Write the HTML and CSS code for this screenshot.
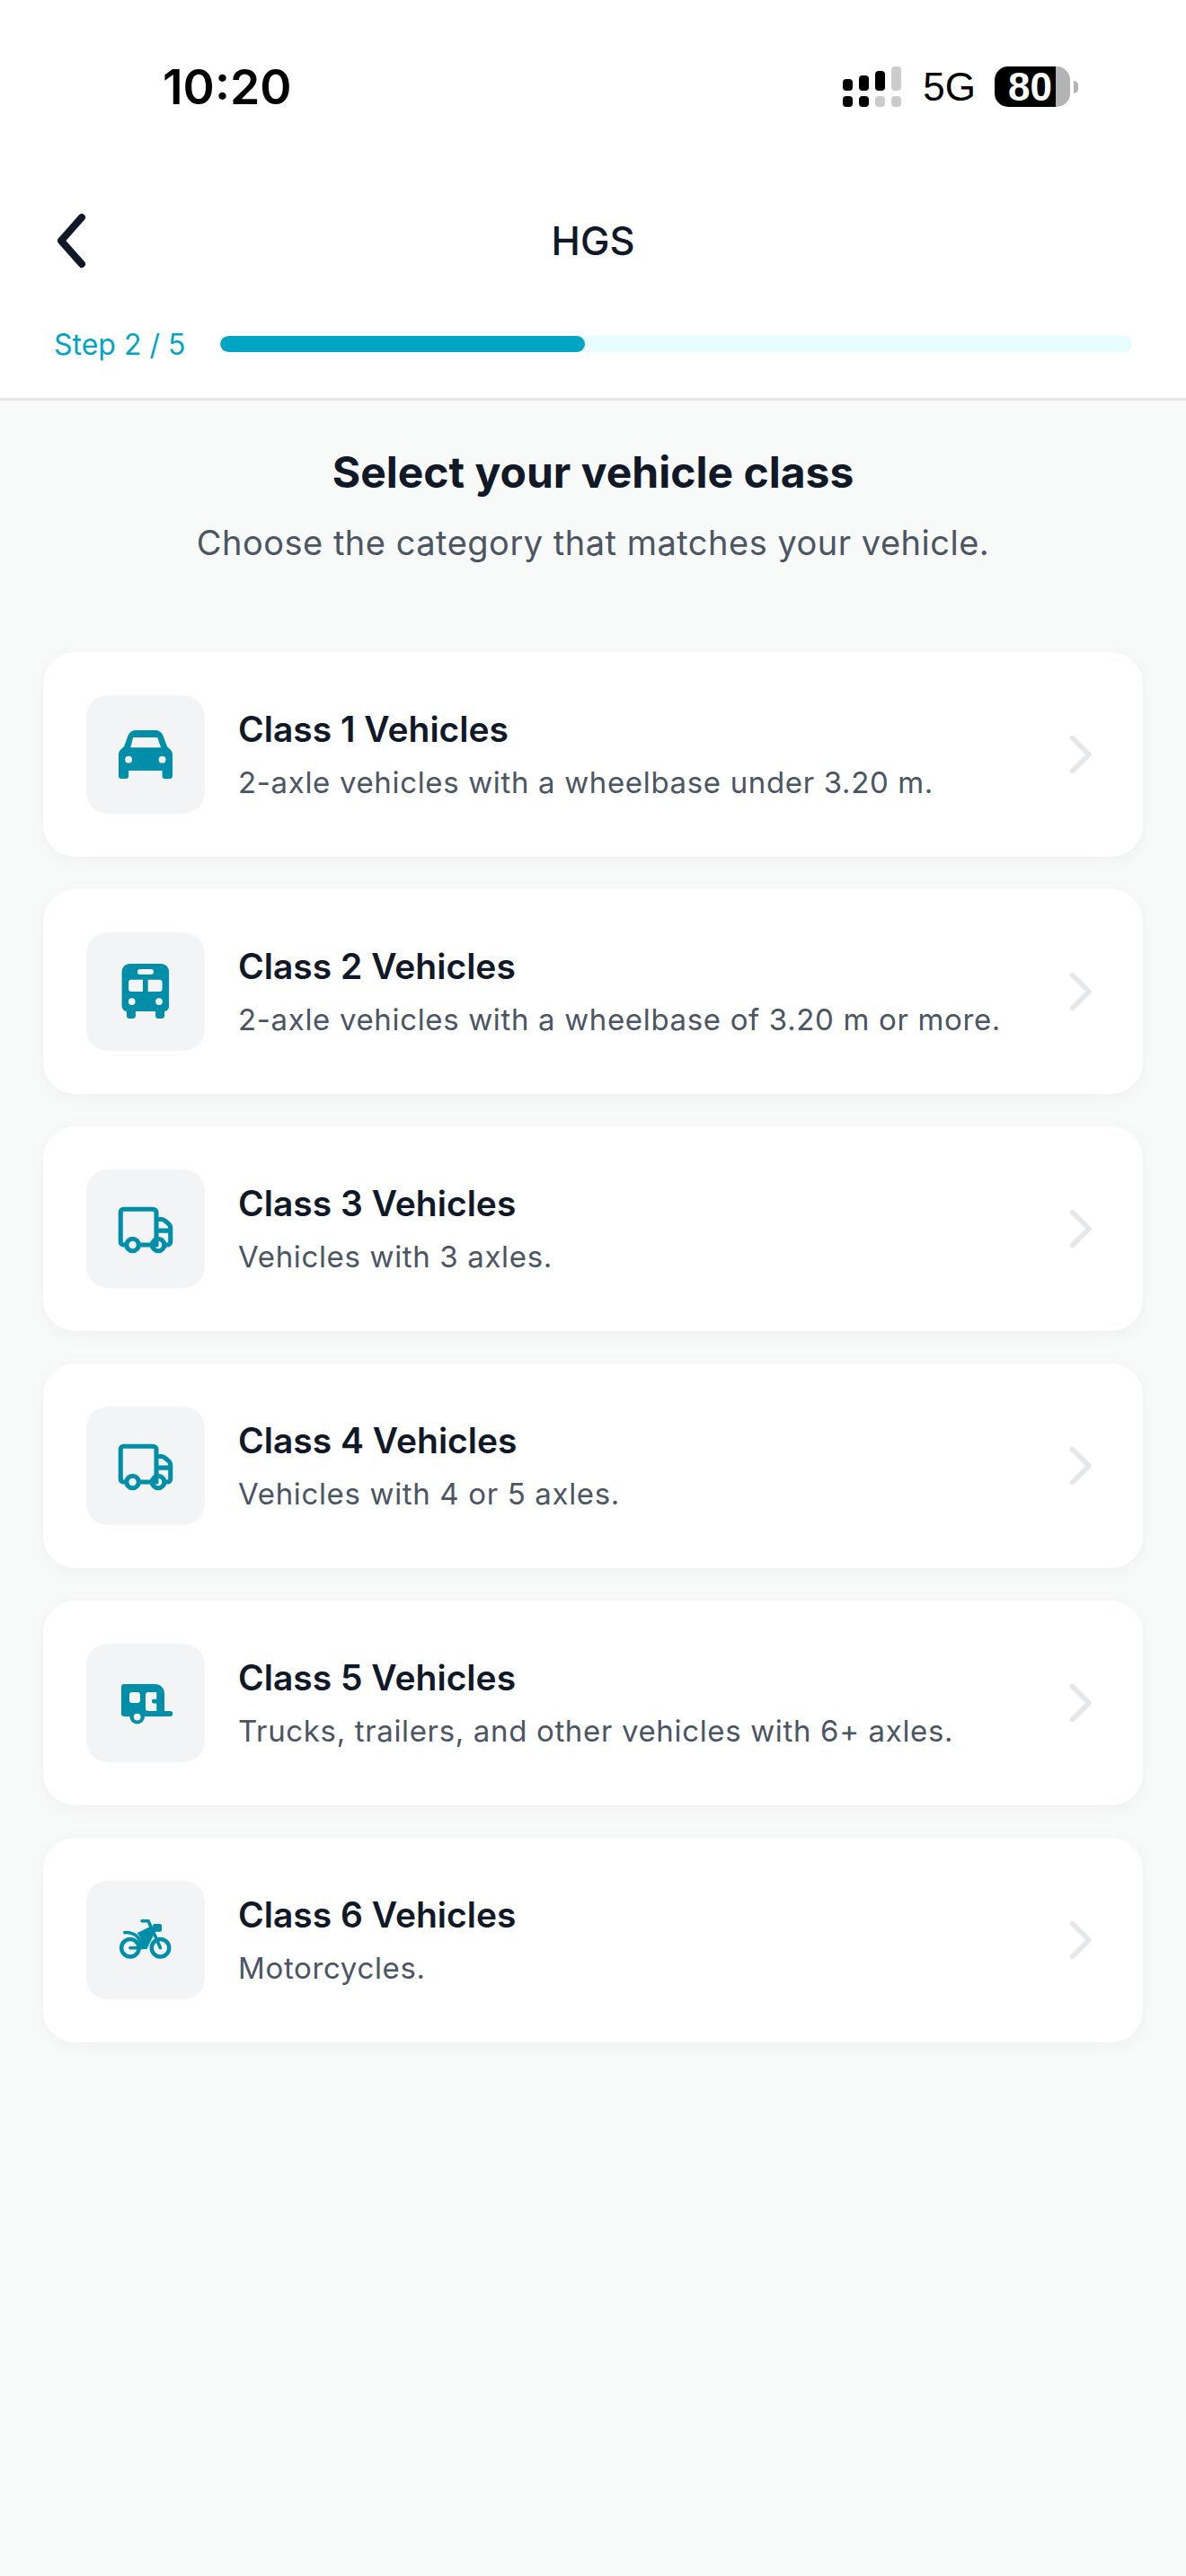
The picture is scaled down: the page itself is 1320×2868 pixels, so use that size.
FILE: index.html
```html
<!DOCTYPE html>
<html lang="en">
<head>
    <meta charset="UTF-8">
    <meta name="viewport" content="width=device-width, initial-scale=1.0">
    <title>HGS</title>
    <link rel="stylesheet" href="styles.css">
</head>
<body>
    <header class="top">
        <div class="status-bar">
            <span class="clock">10:20</span>
            <div class="status-right">
                <div class="signal">
                    <div class="signal-col"><i class="up1"></i><i class="dot"></i></div>
                    <div class="signal-col"><i class="up2"></i><i class="dot"></i></div>
                    <div class="signal-col"><i class="up3"></i><i class="dot off"></i></div>
                    <div class="signal-col"><i class="up4 off"></i><i class="dot off"></i></div>
                </div>
                <span class="network">5G</span>
                <div class="battery">
                    <div class="battery-body"><span class="battery-level">80</span></div>
                    <div class="battery-nub"></div>
                </div>
            </div>
        </div>
        <div class="nav-row">
            <svg class="back" width="48" height="72" viewBox="0 0 48 72" fill="none" stroke="#111827" stroke-width="8" stroke-linecap="round" stroke-linejoin="round"><path d="M35 10 12 36l23 26"/></svg>
            <div class="nav-title">HGS</div>
        </div>
        <div class="step-row">
            <span class="step-label">Step 2 / 5</span>
            <div class="track"><div class="track-fill" style="width: 40%"></div></div>
        </div>
    </header>

    <main class="content">
        <h1 class="heading">Select your vehicle class</h1>
        <p class="subheading">Choose the category that matches your vehicle.</p>

        <div class="class-list">
            <div class="class-card">
                <div class="class-icon">
                    <svg class="glyph" viewBox="0 0 24 24"><path fill-rule="evenodd" d="M8.300 3h7.400c1.300 0 2.300.8 2.800 2l1.500 4.100 1.200 1.100c.5.5.8 1.100.8 1.800v8c0 .6-.4 1-1 1h-1.800c-.6 0-1-.4-1-1v-2H5.700v2c0 .6-.4 1-1 1H3c-.6 0-1-.4-1-1v-8c0-.7.3-1.300.8-1.800L4 9.100 5.500 5c.5-1.200 1.500-2 2.800-2Zm-.9 2.700-1 3.700h11.300l-1.300-3.700H7.400ZM5.700 12.600a1.300 1.300 0 1 0 0 2.600 1.300 1.300 0 0 0 0-2.600Zm12.500 0a1.300 1.300 0 1 0 0 2.600 1.300 1.300 0 0 0 0-2.600Z"/></svg>
                </div>
                <div class="class-text">
                    <div class="class-title">Class 1 Vehicles</div>
                    <div class="class-desc">2-axle vehicles with a wheelbase under 3.20 m.</div>
                </div>
                <svg class="chevron" width="48" height="48" viewBox="0 0 48 48" fill="none" stroke="#e5e7eb" stroke-width="5.500" stroke-linecap="round" stroke-linejoin="round"><path d="M14.500 5.500 33 24 14.500 42.500"/></svg>
            </div>

            <div class="class-card">
                <div class="class-icon">
                    <svg class="glyph" viewBox="0 0 24 24"><path fill-rule="evenodd" d="M6.200 1.700h11.500c1.700 0 3 1.300 3 3v12.600c0 1.100-.8 2-1.700 2V21c0 .6-.4 1-1 1h-1.300c-.6 0-1-.4-1-1v-1.700H8.300V21c0 .6-.4 1-1 1H6c-.6 0-1-.4-1-1v-1.700c-1-.1-1.800-.9-1.800-2V4.700c0-1.700 1.300-3 3-3ZM10 3.700a1 1 0 0 0 0 2h4a1 1 0 0 0 0-2h-4ZM6.700 7.600c-.6 0-1 .4-1 1V11c0 .6.4 1 1 1H11V7.600H6.700Zm6.200 0V12h4.300c.6 0 1-.4 1-1V8.600c0-.6-.4-1-1-1h-4.300ZM6.900 14.400a1.300 1.300 0 1 0 0 2.600 1.300 1.300 0 0 0 0-2.600Zm10.100 0a1.300 1.300 0 1 0 0 2.600 1.300 1.300 0 0 0 0-2.600Z"/></svg>
                </div>
                <div class="class-text">
                    <div class="class-title">Class 2 Vehicles</div>
                    <div class="class-desc">2-axle vehicles with a wheelbase of 3.20 m or more.</div>
                </div>
                <svg class="chevron" width="48" height="48" viewBox="0 0 48 48" fill="none" stroke="#e5e7eb" stroke-width="5.500" stroke-linecap="round" stroke-linejoin="round"><path d="M14.500 5.500 33 24 14.500 42.500"/></svg>
            </div>

            <div class="class-card">
                <div class="class-icon">
                    <svg class="glyph outline" viewBox="0 0 24 24"><path d="M4.300 18H3.800c-.6 0-1.050-.5-1.050-1.100V5.900c0-.6.450-1.150 1.050-1.150h10.900c.7 0 1.300.5 1.300 1.150V18M9.600 18h4.800M19 18h1c.7 0 1.250-.5 1.250-1.100v-5.200c0-.6-.2-1-.6-1.400l-1.500-1.300c-.4-.3-.8-.5-1.300-.5H16M16 12.700h5.250"/><circle cx="7.200" cy="18" r="2.250"/><circle cx="16.700" cy="18" r="2.250"/></svg>
                </div>
                <div class="class-text">
                    <div class="class-title">Class 3 Vehicles</div>
                    <div class="class-desc">Vehicles with 3 axles.</div>
                </div>
                <svg class="chevron" width="48" height="48" viewBox="0 0 48 48" fill="none" stroke="#e5e7eb" stroke-width="5.500" stroke-linecap="round" stroke-linejoin="round"><path d="M14.500 5.500 33 24 14.500 42.500"/></svg>
            </div>

            <div class="class-card">
                <div class="class-icon">
                    <svg class="glyph outline" viewBox="0 0 24 24"><path d="M4.300 18H3.800c-.6 0-1.050-.5-1.050-1.100V5.900c0-.6.450-1.150 1.050-1.150h10.900c.7 0 1.300.5 1.300 1.150V18M9.600 18h4.800M19 18h1c.7 0 1.250-.5 1.250-1.100v-5.200c0-.6-.2-1-.6-1.400l-1.500-1.300c-.4-.3-.8-.5-1.300-.5H16M16 12.700h5.250"/><circle cx="7.200" cy="18" r="2.250"/><circle cx="16.700" cy="18" r="2.250"/></svg>
                </div>
                <div class="class-text">
                    <div class="class-title">Class 4 Vehicles</div>
                    <div class="class-desc">Vehicles with 4 or 5 axles.</div>
                </div>
                <svg class="chevron" width="48" height="48" viewBox="0 0 48 48" fill="none" stroke="#e5e7eb" stroke-width="5.500" stroke-linecap="round" stroke-linejoin="round"><path d="M14.500 5.500 33 24 14.500 42.500"/></svg>
            </div>

            <div class="class-card">
                <div class="class-icon">
                    <svg class="glyph" viewBox="0 0 24 24"><path fill-rule="evenodd" d="M4 5h11.500C17.500 5 19 6.500 19 8.500V15h2.100a1 1 0 0 1 0 2H11.700a2.800 2.800 0 0 1-5.600 0H4c-.6 0-1-.4-1-1V6c0-.6.400-1 1-1Zm2.900 3c-.5 0-.9.400-.9.900v2.200c0 .5.400.9.900.9h2.200c.5 0 .9-.4.900-.9V8.900c0-.5-.4-.9-.9-.9H6.900Zm6 0c-.5 0-.9.400-.9.900v5.200c0 .5.400.9.900.9H16.100v-2.800h-1a.8.800 0 0 1 0-1.600h1V8H12.900ZM8.900 15.900a1.300 1.300 0 1 0 0 2.600 1.300 1.300 0 0 0 0-2.600Z"/></svg>
                </div>
                <div class="class-text">
                    <div class="class-title">Class 5 Vehicles</div>
                    <div class="class-desc">Trucks, trailers, and other vehicles with 6+ axles.</div>
                </div>
                <svg class="chevron" width="48" height="48" viewBox="0 0 48 48" fill="none" stroke="#e5e7eb" stroke-width="5.500" stroke-linecap="round" stroke-linejoin="round"><path d="M14.500 5.500 33 24 14.500 42.500"/></svg>
            </div>

            <div class="class-card">
                <div class="class-icon">
                    <svg class="glyph" viewBox="0 0 24 24">
                        <circle cx="6.300" cy="14.900" r="3.250" fill="none" stroke="#008ea8" stroke-width="1.500"/>
                        <circle cx="17.500" cy="14.900" r="3.250" fill="none" stroke="#008ea8" stroke-width="1.500"/>
                        <path d="M6.300 14.900h3.900" fill="none" stroke="#008ea8" stroke-width="1.200" stroke-linecap="round"/>
                        <path d="M4.300 9.200c3.600-.2 6.100 2 6.400 5.700" fill="none" stroke="#008ea8" stroke-width="1.200" stroke-linecap="round"/>
                        <path d="M8.800 9.400 14 6.800l1.200 2.900-2.700 5.600H10.800c0-2.500-.6-4.700-2-5.900Z"/>
                        <path d="M10.700 4.900H13l2.600 5.700 1.900 4.300" fill="none" stroke="#008ea8" stroke-width="1.200" stroke-linecap="round" stroke-linejoin="round"/>
                        <rect x="14.700" y="6" width="3.300" height="2.900" rx=".6"/>
                    </svg>
                </div>
                <div class="class-text">
                    <div class="class-title">Class 6 Vehicles</div>
                    <div class="class-desc">Motorcycles.</div>
                </div>
                <svg class="chevron" width="48" height="48" viewBox="0 0 48 48" fill="none" stroke="#e5e7eb" stroke-width="5.500" stroke-linecap="round" stroke-linejoin="round"><path d="M14.500 5.500 33 24 14.500 42.500"/></svg>
            </div>
        </div>
    </main>
</body>
</html>
```

FILE: styles.css
```css
* {
    box-sizing: border-box;
}
body {
    margin: 0;
    width: 1320px;
    height: 2868px;
    overflow: hidden;
    font-family: Inter, "Liberation Sans", sans-serif;
    background-color: #f8fafa;
    color: #111827;
}
.top {
    height: 446px;
    background: white;
    border-bottom: 3px solid #e5e7eb;
}
.status-bar {
    height: 190px;
    padding: 74px 120px 0 181px;
    display: flex;
    justify-content: space-between;
    align-items: flex-start;
}
.clock {
    font-size: 53.5px;
    line-height: 46px;
    font-weight: 600;
    color: black;
}
.status-right {
    display: flex;
    align-items: flex-start;
}
.signal {
    display: flex;
    gap: 7px;
    height: 45px;
    margin-right: 24px;
}
.signal-col {
    width: 11px;
    height: 45px;
    display: flex;
    flex-direction: column;
    justify-content: flex-end;
    gap: 6px;
}
.signal-col i {
    display: block;
    background: black;
    border-radius: 4px;
}
.signal-col .off {
    background: #cccccc;
}
.dot { height: 12px; }
.up1 { height: 13px; }
.up2 { height: 17px; }
.up3 { height: 22px; }
.up4 { height: 27px; }
.network {
    font-family: "Liberation Sans", sans-serif;
    font-size: 44px;
    line-height: 46px;
    color: black;
    margin-right: 21px;
}
.battery {
    display: flex;
    align-items: center;
    gap: 4px;
    height: 45px;
}
.battery-body {
    width: 84px;
    height: 45px;
    border-radius: 15px;
    background: linear-gradient(to right, black 68px, #b3b3b3 68px);
}
.battery-level {
    display: block;
    padding-left: 15px;
    font-family: "Liberation Sans", sans-serif;
    font-size: 44px;
    line-height: 45px;
    font-weight: 700;
    color: white;
}
.battery-nub {
    width: 5px;
    height: 14px;
    background: #b3b3b3;
    border-radius: 0 7px 7px 0;
}
.nav-row {
    display: grid;
    grid-template-columns: 1fr auto 1fr;
    align-items: center;
    height: 72px;
    margin-top: 42px;
    padding-left: 56px;
}
.nav-title {
    grid-column: 2;
    font-size: 43.5px;
    font-weight: 500;
    margin-left: -56px;
}
.back {
    grid-column: 1;
    grid-row: 1;
}
.step-row {
    display: flex;
    align-items: center;
    gap: 40px;
    margin-top: 59px;
    padding: 0 60px;
    height: 40px;
}
.step-label {
    font-size: 32px;
    color: #00a5c3;
    width: 145px;
    white-space: nowrap;
}
.track {
    flex: 1;
    height: 18px;
    background: #e6fcfd;
    border-radius: 9px;
    overflow: hidden;
}
.track-fill {
    height: 100%;
    background: #00a5c3;
    border-radius: 9px;
}
.content {
    padding: 0 48px;
}
.heading {
    margin: 51px 0 0;
    font-size: 48px;
    line-height: 58px;
    font-weight: 700;
    text-align: center;
}
.subheading {
    margin: 24px 0 0;
    font-size: 38px;
    line-height: 50px;
    letter-spacing: 0.5px;
    color: #4b5563;
    text-align: center;
}
.class-list {
    display: flex;
    flex-direction: column;
    gap: 36px;
    margin-top: 97px;
}
.class-card {
    height: 228px;
    display: flex;
    align-items: center;
    padding: 0 45px 0 48px;
    background: white;
    border-radius: 36px;
    box-shadow: 0 4px 20px rgba(0, 0, 0, 0.04);
}
.class-icon {
    width: 132px;
    height: 132px;
    flex-shrink: 0;
    display: flex;
    align-items: center;
    justify-content: center;
    background: #f3f4f6;
    border-radius: 24px;
}
.glyph {
    width: 72px;
    height: 72px;
    fill: #008ea8;
}
.glyph.outline {
    fill: none;
    stroke: #008ea8;
    stroke-width: 1.7;
    stroke-linecap: round;
    stroke-linejoin: round;
}
.class-text {
    flex: 1;
    margin-left: 37px;
    padding-top: 2px;
}
.class-title {
    font-size: 39px;
    line-height: 48px;
    font-weight: 600;
}
.class-desc {
    margin-top: 12px;
    font-size: 33px;
    line-height: 46px;
    letter-spacing: 0.65px;
    color: #4b5563;
}
.chevron {
    flex-shrink: 0;
}
```
